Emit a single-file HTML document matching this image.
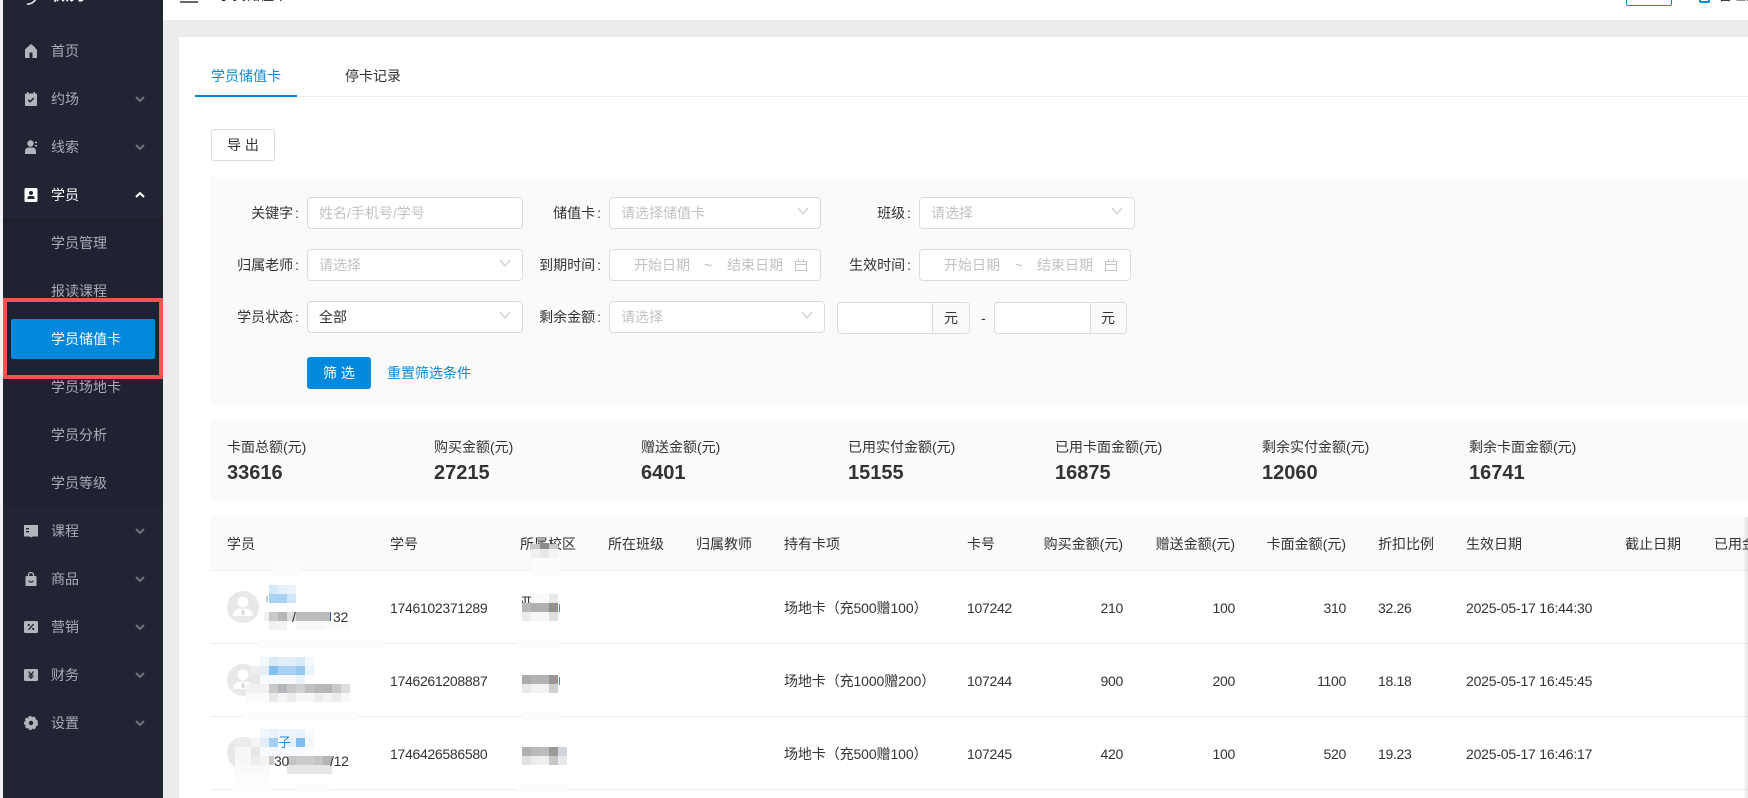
<!DOCTYPE html>
<html lang="zh"><head><meta charset="utf-8"><title>学员储值卡</title>
<style>
*{box-sizing:border-box}
html,body{margin:0;padding:0;width:1748px;height:798px;overflow:hidden;background:#fff}
body{position:relative;font:14px/20px "Liberation Sans","Noto Sans CJK SC",sans-serif;color:#333}
div,span,svg{position:absolute}
i{font-style:normal;margin-left:2px}
.t{white-space:nowrap;height:20px}
.n{letter-spacing:-.3px}
.c{letter-spacing:-.1px}
.m{color:#a9acb6;left:51px}
.ph{color:#c2c2c2}
.b{background:#fff;border:1px solid #dcdcdc;border-radius:4px;height:32px}
.r{text-align:right}
.v{font-size:20px;font-weight:bold;line-height:24px;height:24px;white-space:nowrap;color:#333}
.l{background:#eeeeee;height:1px;left:211px;right:0}
</style></head><body>
<!-- sidebar -->
<div style="left:0;top:0;width:3px;height:798px;background:#f2f2f2"></div>
<div style="left:3px;top:0;width:160px;height:798px;background:#212533"></div>
<div style="left:3px;top:219px;width:160px;height:288px;background:#1f2231;box-shadow:inset 0 6px 6px -6px rgba(0,0,0,.35)"></div>
<div style="left:3px;top:0;width:160px;height:3px;overflow:hidden"><span class="t" style="left:49px;top:-15px;color:#fff;font-weight:bold;font-size:17px">微力</span></div>
<svg style="left:26px;top:0" width="12" height="5" viewBox="0 0 12 5"><path d="M1 4.500 6 3 9 .5 9.500 0" fill="none" stroke="#e8e8e8" stroke-width="1.600"/></svg>

<svg style="left:24px;top:44px" width="14" height="14" viewBox="0 0 14 14"><path fill="#b3b5bc" fill-rule="evenodd" d="M7 0l4 3.200V4l2 1.600V13a1 1 0 0 1-1 1H2a1 1 0 0 1-1-1V5.400zM5.500 8.500V14h3V8.500z"/></svg>
<svg style="left:24px;top:92px" width="14" height="14" viewBox="0 0 14 14"><path fill="#b3b5bc" d="M3 0h1.500v1.500h5V0H11v1.500h1a1 1 0 0 1 1 1V13a1 1 0 0 1-1 1H2a1 1 0 0 1-1-1V2.500a1 1 0 0 1 1-1h1z"/><path d="M4.300 7.800 6.200 9.800 9.800 6" fill="none" stroke="#212533" stroke-width="1.500"/></svg>
<svg style="left:24px;top:140px" width="14" height="14" viewBox="0 0 14 14"><circle cx="6.500" cy="3.500" r="3.200" fill="#b3b5bc"/><path fill="#b3b5bc" d="M1 14v-3a3.500 3.500 0 0 1 3.500-3.500h4A3.500 3.500 0 0 1 12 11v3z"/><path fill="#b3b5bc" d="M11 1.800h2v1.500h-2zM11 5h2v1.500h-2z"/></svg>
<svg style="left:24px;top:188px" width="14" height="14" viewBox="0 0 14 14"><path fill="#fff" fill-rule="evenodd" d="M2 0h10a1.500 1.500 0 0 1 1.500 1.500v11A1.500 1.500 0 0 1 12 14H2A1.500 1.500 0 0 1 .5 12.500v-11A1.500 1.500 0 0 1 2 0zM7 3a2 2 0 1 0 0 4 2 2 0 0 0 0-4zM3.500 11h7V9.800A1.800 1.800 0 0 0 8.700 8H5.300a1.800 1.800 0 0 0-1.800 1.800z"/></svg>
<svg style="left:24px;top:524px" width="14" height="14" viewBox="0 0 14 14"><path fill="#b3b5bc" d="M0 1h14v11.500H8.500L7 13.500 5.500 12.500H0z"/><path fill="#212533" d="M2 4h3v1.400H2zM2 7h3v1.400H2z"/></svg>
<svg style="left:24px;top:572px" width="14" height="14" viewBox="0 0 14 14"><path fill="none" stroke="#b3b5bc" stroke-width="1.300" d="M4.500 5V3a2.500 2.500 0 0 1 5 0v2"/><path fill="#b3b5bc" d="M2.500 4H11.500a1 1 0 0 1 1 1v8a1 1 0 0 1-1 1H2.500a1 1 0 0 1-1-1V5a1 1 0 0 1 1-1z"/><path fill="none" stroke="#212533" stroke-width="1.200" d="M4.800 8.500a2.300 2.300 0 0 0 4.400 0"/></svg>
<svg style="left:24px;top:620px" width="14" height="14" viewBox="0 0 14 14"><rect y="1" width="14" height="12" rx="1.500" fill="#b3b5bc"/><path d="M4.500 9.800 9.500 4.200" stroke="#212533" stroke-width="1.300"/><circle cx="4.800" cy="5" r="1.100" fill="#212533"/><circle cx="9.200" cy="9" r="1.100" fill="#212533"/></svg>
<svg style="left:24px;top:668px" width="14" height="14" viewBox="0 0 14 14"><rect y="1" width="14" height="12" rx="1.500" fill="#b3b5bc"/><path d="M4.500 3.500 7 6.500 9.500 3.500M7 6.500V11M4.500 7h5M4.500 9h5" fill="none" stroke="#212533" stroke-width="1.200"/></svg>
<svg style="left:24px;top:716px" width="14" height="14" viewBox="0 0 14 14"><circle cx="7" cy="7" r="6" fill="#b3b5bc"/><circle cx="7" cy="7" r="6.300" fill="none" stroke="#b3b5bc" stroke-width="1.400" stroke-dasharray="3 1.500"/><circle cx="7" cy="7" r="2.200" fill="#212533"/></svg>

<span class="t m" style="top:41px">首页</span>
<span class="t m" style="top:89px">约场</span>
<span class="t m" style="top:137px">线索</span>
<span class="t m" style="top:185px;color:#fff">学员</span>
<span class="t m" style="top:233px">学员管理</span>
<span class="t m" style="top:281px">报读课程</span>
<div style="left:11px;top:319px;width:144px;height:40px;background:#0088dd;border-radius:2px"></div>
<span class="t m" style="top:329px;color:#fff">学员储值卡</span>
<span class="t m" style="top:377px">学员场地卡</span>
<span class="t m" style="top:425px">学员分析</span>
<span class="t m" style="top:473px">学员等级</span>
<span class="t m" style="top:521px">课程</span>
<span class="t m" style="top:569px">商品</span>
<span class="t m" style="top:617px">营销</span>
<span class="t m" style="top:665px">财务</span>
<span class="t m" style="top:713px">设置</span>
<div style="left:3px;top:298px;width:160px;height:81px;border:4px solid #f55353"></div>

<svg style="left:0;top:0" width="163" height="798" viewBox="0 0 163 798" fill="none" stroke="#70737d" stroke-width="2"><path d="M136 97 140 101 144 97M136 145 140 149 144 145M136 529 140 533 144 529M136 577 140 581 144 577M136 625 140 629 144 625M136 673 140 677 144 673M136 721 140 725 144 721"/><path stroke="#fff" d="M136 197 140 193 144 197"/></svg>

<!-- top -->
<div style="left:163px;top:20px;width:1585px;height:17px;background:#ececec"></div>
<div style="left:163px;top:37px;width:16px;height:761px;background:#ececec"></div>
<div style="left:180px;top:1px;width:18px;height:2px;background:#666"></div>
<div style="left:218px;top:0;width:70px;height:2px;overflow:hidden"><span class="t" style="left:0;top:-15px;font-size:14px;color:#222">学员储值卡</span></div>
<div style="left:1626px;top:-10px;width:46px;height:16px;border:1px solid #0a8ad6;border-radius:2px"></div>
<div style="left:1630px;top:0;width:38px;height:2px;overflow:hidden"><span class="t" style="left:0;top:-15px;font-size:11px;color:#0a8ad6">Pro版本</span></div>
<div style="left:1699px;top:-8px;width:11px;height:11px;border:2px solid #0a8ad6;border-radius:2px"></div>
<div style="left:1718px;top:0;width:30px;height:2px;overflow:hidden"><span class="t" style="left:0;top:-15px;color:#222">管理员</span></div>

<!-- tabs -->
<span class="t" style="left:211px;top:66px;color:#0a8ad6">学员储值卡</span>
<span class="t" style="left:345px;top:66px">停卡记录</span>
<div class="l" style="left:195px;top:96px"></div>
<div style="left:195px;top:95px;width:102px;height:2px;background:#0088dd"></div>
<div style="left:211px;top:129px;width:64px;height:32px;border:1px solid #dcdcdc;border-radius:3px;background:#fff;text-align:center;line-height:30px">导 出</div>

<!-- filter -->
<div style="left:211px;top:177px;right:0;height:228px;background:#fafafa"></div>
<span class="t r" style="right:1449px;top:203px">关键字<i>:</i></span>
<span class="t r" style="right:1449px;top:255px">归属老师<i>:</i></span>
<span class="t r" style="right:1449px;top:307px">学员状态<i>:</i></span>
<span class="t r" style="right:1147px;top:203px">储值卡<i>:</i></span>
<span class="t r" style="right:1147px;top:255px">到期时间<i>:</i></span>
<span class="t r" style="right:1147px;top:307px">剩余金额<i>:</i></span>
<span class="t r" style="right:837px;top:203px">班级<i>:</i></span>
<span class="t r" style="right:837px;top:255px">生效时间<i>:</i></span>

<div class="b" style="left:307px;top:197px;width:216px"></div>
<div class="b" style="left:307px;top:249px;width:216px"></div>
<div class="b" style="left:307px;top:301px;width:216px"></div>
<div class="b" style="left:609px;top:197px;width:212px"></div>
<div class="b" style="left:609px;top:249px;width:212px"></div>
<div class="b" style="left:609px;top:301px;width:216px"></div>
<div class="b" style="left:919px;top:197px;width:216px"></div>
<div class="b" style="left:919px;top:249px;width:212px"></div>
<div class="b" style="left:837px;top:302px;width:133px"></div>
<div style="left:932px;top:303px;width:37px;height:30px;background:#fafafa;border-left:1px solid #dcdcdc;border-radius:0 3px 3px 0"></div>
<div class="b" style="left:994px;top:302px;width:133px"></div>
<div style="left:1090px;top:303px;width:36px;height:30px;background:#fafafa;border-left:1px solid #dcdcdc;border-radius:0 3px 3px 0"></div>
<span class="t" style="left:944px;top:308px">元</span>
<span class="t" style="left:1101px;top:308px">元</span>
<span class="t" style="left:981px;top:308px">-</span>

<span class="t ph" style="left:319px;top:203px">姓名/手机号/学号</span>
<span class="t ph" style="left:319px;top:255px">请选择</span>
<span class="t" style="left:319px;top:307px">全部</span>
<span class="t ph" style="left:621px;top:203px">请选择储值卡</span>
<span class="t ph" style="left:621px;top:307px">请选择</span>
<span class="t ph" style="left:931px;top:203px">请选择</span>
<span class="t ph" style="left:634px;top:255px">开始日期</span>
<span class="t ph" style="left:704px;top:255px">~</span>
<span class="t ph" style="left:727px;top:255px">结束日期</span>
<span class="t ph" style="left:944px;top:255px">开始日期</span>
<span class="t ph" style="left:1015px;top:255px">~</span>
<span class="t ph" style="left:1037px;top:255px">结束日期</span>

<svg style="left:0;top:0" width="1748" height="400" viewBox="0 0 1748 400" fill="none" stroke="#c4c4c4" stroke-width="1"><path d="M798 208 803 214 808 208M1112 208 1117 214 1122 208M500 260 505 266 510 260M500 312 505 318 510 312M802 312 807 318 812 312"/><path d="M795.500 261.500h11v9h-11zM795.500 264.500h11M798.500 259v3M803.500 259v3M1105.500 261.500h11v9h-11zM1105.500 264.500h11M1108.500 259v3M1113.500 259v3"/></svg>

<div style="left:307px;top:357px;width:64px;height:32px;background:#0088dd;border-radius:3px;color:#fff;text-align:center;line-height:32px">筛 选</div>
<span class="t" style="left:387px;top:363px;color:#0a8ad6">重置筛选条件</span>

<!-- stats -->
<div style="left:211px;top:421px;right:0;height:80px;background:#fafafa"></div>
<span class="t" style="left:227px;top:437px">卡面总额(元)</span><span class="v" style="left:227px;top:461px">33616</span>
<span class="t" style="left:434px;top:437px">购买金额(元)</span><span class="v" style="left:434px;top:461px">27215</span>
<span class="t" style="left:641px;top:437px">赠送金额(元)</span><span class="v" style="left:641px;top:461px">6401</span>
<span class="t" style="left:848px;top:437px">已用实付金额(元)</span><span class="v" style="left:848px;top:461px">15155</span>
<span class="t" style="left:1055px;top:437px">已用卡面金额(元)</span><span class="v" style="left:1055px;top:461px">16875</span>
<span class="t" style="left:1262px;top:437px">剩余实付金额(元)</span><span class="v" style="left:1262px;top:461px">12060</span>
<span class="t" style="left:1469px;top:437px">剩余卡面金额(元)</span><span class="v" style="left:1469px;top:461px">16741</span>

<!-- table -->
<div style="left:211px;top:517px;right:0;height:53px;background:#fafafa"></div>
<div class="l" style="top:570px"></div><div class="l" style="top:643px"></div><div class="l" style="top:716px"></div><div class="l" style="top:789px"></div>
<span class="t" style="left:227px;top:534px">学员</span>
<span class="t" style="left:390px;top:534px">学号</span>
<span class="t" style="left:520px;top:534px">所属校区</span>
<span class="t" style="left:608px;top:534px">所在班级</span>
<span class="t" style="left:696px;top:534px">归属教师</span>
<span class="t" style="left:784px;top:534px">持有卡项</span>
<span class="t" style="left:967px;top:534px">卡号</span>
<span class="t r" style="right:625px;top:534px">购买金额(元)</span>
<span class="t r" style="right:513px;top:534px">赠送金额(元)</span>
<span class="t r" style="right:402px;top:534px">卡面金额(元)</span>
<span class="t" style="left:1378px;top:534px">折扣比例</span>
<span class="t" style="left:1466px;top:534px">生效日期</span>
<span class="t" style="left:1625px;top:534px">截止日期</span>
<span class="t" style="left:1714px;top:534px">已用金额</span>

<svg style="left:227px;top:591px" width="32" height="32" viewBox="0 0 32 32"><circle cx="16" cy="16" r="16" fill="#e8e8e8"/><circle cx="16" cy="11" r="5.500" fill="#fff"/><path fill="#fff" d="M6 25c0-5 4-7 7-7.500l3 1 3-1c3 .5 7 2.500 7 7.500z"/><path fill="#d8d8d8" d="M15 19h2l.7 5H14.300z"/></svg>
<svg style="left:227px;top:664px" width="32" height="32" viewBox="0 0 32 32"><circle cx="16" cy="16" r="16" fill="#e8e8e8"/><circle cx="16" cy="11" r="5.500" fill="#fff"/><path fill="#fff" d="M6 25c0-5 4-7 7-7.500l3 1 3-1c3 .5 7 2.500 7 7.500z"/><path fill="#d8d8d8" d="M15 19h2l.7 5H14.300z"/></svg>
<svg style="left:227px;top:737px" width="32" height="32" viewBox="0 0 32 32"><circle cx="16" cy="16" r="16" fill="#e8e8e8"/></svg>

<span class="t n" style="left:390px;top:598px">1746102371289</span>
<span class="t n" style="left:390px;top:671px">1746261208887</span>
<span class="t n" style="left:390px;top:744px">1746426586580</span>
<span class="t c" style="left:784px;top:598px">场地卡（充500赠100）</span>
<span class="t c" style="left:784px;top:671px">场地卡（充1000赠200）</span>
<span class="t c" style="left:784px;top:744px">场地卡（充500赠100）</span>
<span class="t n" style="left:967px;top:598px">107242</span>
<span class="t n" style="left:967px;top:671px">107244</span>
<span class="t n" style="left:967px;top:744px">107245</span>
<span class="t n r" style="right:625px;top:598px">210</span>
<span class="t n r" style="right:625px;top:671px">900</span>
<span class="t n r" style="right:625px;top:744px">420</span>
<span class="t n r" style="right:513px;top:598px">100</span>
<span class="t n r" style="right:513px;top:671px">200</span>
<span class="t n r" style="right:513px;top:744px">100</span>
<span class="t n r" style="right:402px;top:598px">310</span>
<span class="t n r" style="right:402px;top:671px">1100</span>
<span class="t n r" style="right:402px;top:744px">520</span>
<span class="t n" style="left:1378px;top:598px">32.26</span>
<span class="t n" style="left:1378px;top:671px">18.18</span>
<span class="t n" style="left:1378px;top:744px">19.23</span>
<span class="t n" style="left:1466px;top:598px;letter-spacing:-.2px">2025-05-17 16:44:30</span>
<span class="t n" style="left:1466px;top:671px;letter-spacing:-.2px">2025-05-17 16:45:45</span>
<span class="t n" style="left:1466px;top:744px;letter-spacing:-.2px">2025-05-17 16:46:17</span>
<div style="left:522px;top:596px;width:9px;height:8px;overflow:hidden"><span class="t" style="left:-2px;top:-3px">亚</span></div>

<!-- mosaic -->
<svg style="left:0;top:0" width="1748" height="798" viewBox="0 0 1748 798">
<g fill="#fcfcfc"><rect x="272" y="566" width="30" height="10"/><rect x="258" y="639" width="125" height="9"/><rect x="243" y="711" width="115" height="9"/><rect x="232" y="784" width="40" height="9"/><rect x="296" y="784" width="34" height="9"/><rect x="531" y="558" width="29" height="18"/><rect x="517" y="639" width="43" height="9"/><rect x="522" y="711" width="38" height="9"/><rect x="517" y="784" width="50" height="9"/></g>
<rect x="266" y="596" width="2" height="6" fill="#c8c8f0"/>
<rect x="269" y="585" width="9" height="9" fill="#d3e9f9"/><rect x="278" y="585" width="9" height="9" fill="#e3f0fb"/><rect x="287" y="585" width="9" height="9" fill="#e8f3fc"/>
<rect x="269" y="594" width="9" height="9" fill="#a8d2f1"/><rect x="278" y="594" width="9" height="9" fill="#a8d2f1"/><rect x="287" y="594" width="9" height="9" fill="#cfe6f8"/>
<rect x="264" y="612" width="5" height="9" fill="#f5f1ee"/><rect x="269" y="612" width="9" height="9" fill="#c9c9c9"/><rect x="278" y="612" width="9" height="9" fill="#b5b5b5"/><rect x="287" y="612" width="9" height="9" fill="#dedede"/><rect x="296" y="612" width="34" height="9" fill="#bcbcbc"/><rect x="330" y="612" width="1" height="9" fill="#3a5a9a"/>
<rect x="269" y="621" width="9" height="9" fill="#f0f0f0"/><rect x="278" y="621" width="9" height="9" fill="#f3f3f3"/><rect x="296" y="621" width="27" height="9" fill="#f8f8f8"/><rect x="323" y="621" width="27" height="9" fill="#fbfbfb"/>

<rect x="260" y="657" width="9" height="9" fill="#f0f7fd"/><rect x="269" y="657" width="9" height="9" fill="#d9ebf9"/><rect x="278" y="657" width="9" height="9" fill="#e0eefa"/><rect x="287" y="657" width="9" height="9" fill="#e3f0fb"/><rect x="296" y="657" width="9" height="9" fill="#d9ebf9"/><rect x="305" y="657" width="9" height="9" fill="#f5faff"/>
<rect x="251" y="666" width="9" height="9" fill="#eeeeee"/><rect x="260" y="666" width="9" height="9" fill="#e2edf9"/><rect x="269" y="666" width="9" height="9" fill="#85c1ee"/><rect x="278" y="666" width="18" height="9" fill="#a9d1f2"/><rect x="296" y="666" width="9" height="9" fill="#97c9f0"/><rect x="305" y="666" width="9" height="9" fill="#e6f4fd"/>
<rect x="251" y="675" width="9" height="9" fill="#e8e8e8"/><rect x="260" y="675" width="36" height="9" fill="#f6fafe"/><rect x="296" y="675" width="9" height="9" fill="#e8f3fa"/>
<rect x="246" y="684" width="23" height="9" fill="#f4f2f1"/><rect x="269" y="684" width="9" height="9" fill="#c9c9c9"/><rect x="278" y="684" width="9" height="9" fill="#b3b5b8"/><rect x="287" y="684" width="9" height="9" fill="#c8c8c8"/><rect x="296" y="684" width="9" height="9" fill="#d0d0d0"/><rect x="305" y="684" width="9" height="9" fill="#c2c0be"/><rect x="314" y="684" width="9" height="9" fill="#b8b8b8"/><rect x="323" y="684" width="9" height="9" fill="#b4b5b8"/><rect x="332" y="684" width="9" height="9" fill="#c8c8c8"/><rect x="341" y="684" width="9" height="9" fill="#dcdcdc"/>
<rect x="246" y="693" width="23" height="9" fill="#fbfbfb"/><rect x="269" y="693" width="9" height="9" fill="#e8e8e8"/><rect x="278" y="693" width="9" height="9" fill="#f3f4f5"/><rect x="287" y="693" width="9" height="9" fill="#ececec"/><rect x="296" y="693" width="18" height="9" fill="#f7f7f7"/><rect x="314" y="693" width="9" height="9" fill="#ececea"/><rect x="323" y="693" width="9" height="9" fill="#f3f4f5"/><rect x="332" y="693" width="9" height="9" fill="#ececec"/><rect x="341" y="693" width="9" height="9" fill="#f6f7f7"/>

<rect x="260" y="729" width="9" height="9" fill="#f0f7fd"/><rect x="269" y="729" width="9" height="9" fill="#e6f2fc"/><rect x="278" y="729" width="18" height="9" fill="#eef6fc"/><rect x="296" y="729" width="9" height="9" fill="#e6f3fc"/><rect x="305" y="729" width="9" height="9" fill="#f8fcff"/>
<rect x="235" y="738" width="16" height="9" fill="#ececec"/><rect x="251" y="738" width="9" height="9" fill="#f5f5f5"/><rect x="260" y="738" width="9" height="9" fill="#e2edf9"/><rect x="269" y="738" width="9" height="9" fill="#a5cff1"/><rect x="278" y="738" width="9" height="9" fill="#fff"/><rect x="287" y="738" width="9" height="9" fill="#e5f2fb"/><rect x="296" y="738" width="9" height="9" fill="#7fbdec"/><rect x="305" y="738" width="9" height="9" fill="#f0f8fe"/>
<rect x="235" y="747" width="16" height="9" fill="#f7f7f7"/><rect x="251" y="747" width="9" height="9" fill="#e6e6e6"/><rect x="260" y="747" width="45" height="9" fill="#f6fafe"/><rect x="305" y="747" width="9" height="9" fill="#fbfdff"/>
<rect x="235" y="756" width="16" height="9" fill="#f7f7f7"/><rect x="251" y="756" width="9" height="9" fill="#eeeeee"/><rect x="260" y="756" width="9" height="9" fill="#f5f2f0"/><rect x="269" y="756" width="5" height="9" fill="#c9c9c9"/><rect x="287" y="756" width="9" height="9" fill="#c4c4c4"/><rect x="296" y="756" width="18" height="9" fill="#cccccc"/><rect x="314" y="756" width="9" height="9" fill="#c5c5c5"/><rect x="323" y="756" width="9" height="9" fill="#b4b4b4"/>
<rect x="235" y="765" width="34" height="9" fill="#f9f9f9"/><rect x="287" y="765" width="45" height="9" fill="#e6e6e6"/><rect x="235" y="774" width="34" height="14" fill="#fdfdfd"/>

<rect x="531" y="544" width="9" height="5" fill="#c8c8c8"/><rect x="540" y="543" width="9" height="6" fill="#8c8c8c"/><rect x="549" y="544" width="9" height="5" fill="#c8c8c8"/><rect x="531" y="549" width="9" height="9" fill="#f0f0f0"/><rect x="540" y="549" width="9" height="9" fill="#e8e8e8"/><rect x="549" y="549" width="9" height="9" fill="#f5f5f5"/>
<rect x="531" y="594" width="9" height="9" fill="#f7f9fb"/><rect x="540" y="594" width="9" height="9" fill="#fafafa"/><rect x="549" y="594" width="9" height="9" fill="#e8e8e8"/>
<rect x="522" y="603" width="9" height="9" fill="#b8b8b8"/><rect x="531" y="603" width="18" height="9" fill="#b0b0b0"/><rect x="549" y="603" width="9" height="9" fill="#938f8c"/>
<rect x="522" y="612" width="9" height="9" fill="#ebebeb"/><rect x="531" y="612" width="9" height="9" fill="#f4f6f8"/><rect x="540" y="612" width="9" height="9" fill="#f7f7f7"/><rect x="549" y="612" width="9" height="9" fill="#e0e0e0"/>
<rect x="559" y="604" width="1" height="8" fill="#5588cc"/><rect x="559" y="677" width="1" height="8" fill="#5588cc"/>
<rect x="522" y="675" width="9" height="9" fill="#ababab"/><rect x="531" y="675" width="9" height="9" fill="#b3b3b3"/><rect x="540" y="675" width="9" height="9" fill="#b3b3b5"/><rect x="549" y="675" width="9" height="9" fill="#9a9694"/>
<rect x="522" y="684" width="9" height="9" fill="#e8e8e8"/><rect x="531" y="684" width="9" height="9" fill="#f3f3f4"/><rect x="540" y="684" width="9" height="9" fill="#f4f3f1"/><rect x="549" y="684" width="9" height="9" fill="#cfcfcf"/>
<rect x="522" y="747" width="9" height="9" fill="#b0b0b0"/><rect x="531" y="747" width="9" height="9" fill="#b9b9b9"/><rect x="540" y="747" width="9" height="9" fill="#bcbcc0"/><rect x="549" y="747" width="9" height="9" fill="#9d9996"/><rect x="558" y="747" width="9" height="9" fill="#d0d4dc"/>
<rect x="522" y="756" width="9" height="9" fill="#e2e2e2"/><rect x="531" y="756" width="9" height="9" fill="#ecedf0"/><rect x="540" y="756" width="9" height="9" fill="#f0efed"/><rect x="549" y="756" width="9" height="9" fill="#c6c6c6"/><rect x="558" y="756" width="9" height="9" fill="#e6e8ec"/>
</svg>
<span class="t n" style="left:333px;top:607px">32</span>
<span class="t" style="left:292px;top:607px;width:5px;overflow:hidden">/</span>
<span class="t n" style="left:274px;top:751px">30</span>
<span class="t n" style="left:330px;top:751px">/12</span>
<span class="t" style="left:278px;top:733px;color:#1a8fe0;font-size:13px">子</span>

<div style="left:1743px;top:517px;width:5px;height:281px;background:linear-gradient(90deg,rgba(0,0,0,0),rgba(0,0,0,.1))"></div>
</body></html>
